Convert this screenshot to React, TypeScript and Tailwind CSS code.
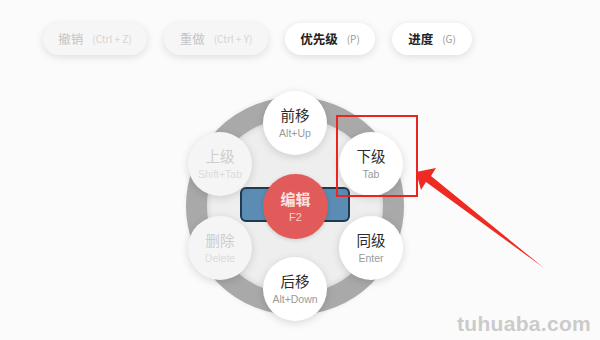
const font = "font-['Noto_Sans_CJK_SC','Noto_Sans',sans-serif]";

type Node = {
  title: string;
  key: string;
  pos: string;
  disabled?: boolean;
};

const nodes: Node[] = [
  { title: '前移', key: 'Alt+Up', pos: 'left-[77px] top-[-6px]' },
  { title: '上级', key: 'Shift+Tab', pos: 'left-[2px] top-[35px]', disabled: true },
  { title: '下级', key: 'Tab', pos: 'left-[153px] top-[35px]' },
  { title: '删除', key: 'Delete', pos: 'left-[2px] top-[119px]', disabled: true },
  { title: '同级', key: 'Enter', pos: 'left-[153px] top-[119px]' },
  { title: '后移', key: 'Alt+Down', pos: 'left-[77px] top-[160px]' },
];

const toolbar = [
  { label: '撤销', key: '(Ctrl + Z)', w: 'w-[104px]', disabled: true },
  { label: '重做', key: '(Ctrl + Y)', w: 'w-[104px]', disabled: true },
  { label: '优先级', key: '(P)', w: 'w-[90px]' },
  { label: '进度', key: '(G)', w: 'w-[80px]' },
];

export default function App() {
  return (
    <div className={`relative w-[600px] h-[340px] overflow-hidden bg-[#fbfbfb] ${font}`}>
      {/* Toolbar */}
      <div className="flex gap-[17px] pl-[43px] pt-[23px]">
        {toolbar.map((b) => (
          <div
            key={b.label}
            className={`${b.w} h-[32px] rounded-[16px] flex items-center justify-center gap-[9px] shadow-[0_2px_8px_rgba(0,0,0,0.12)] ${
              b.disabled ? 'bg-[#f6f6f6]' : 'bg-white'
            }`}
          >
            <span
              className={`text-[12.5px] leading-none ${
                b.disabled ? 'text-[#c4c4c4]' : 'text-[#222] font-bold'
              }`}
            >
              {b.label}
            </span>
            <span
              className={`text-[10px] leading-none ${
                b.disabled ? 'text-[#d4d4d4]' : 'text-[#999]'
              }`}
            >
              {b.key}
            </span>
          </div>
        ))}
      </div>

      {/* Radial menu */}
      <div className="relative ml-[186px] mt-[42px] w-[218px] h-[218px]">
        <div className="absolute inset-0 rounded-full border-[21px] border-[#a9a9a9] bg-[#eeeeee] shadow-[inset_0_0_6px_rgba(0,0,0,0.15),0_0_4px_rgba(0,0,0,0.08)]" />

        <div className="absolute left-[54px] top-[90px] w-[110px] h-[35px] rounded-[6px] border-2 border-[#203a52] bg-[#5b8cb3]" />

        {nodes.map((n) => (
          <div
            key={n.title}
            className={`absolute ${n.pos} w-[64px] h-[64px] rounded-full flex flex-col items-center justify-center shadow-[0_2px_8px_rgba(0,0,0,0.14)] ${
              n.disabled ? 'bg-[#f5f5f5]' : 'bg-white'
            }`}
          >
            <span
              className={`text-[14.5px] leading-[18px] ${
                n.disabled ? 'text-[#cdcdcd]' : 'text-[#2b2b2b]'
              }`}
            >
              {n.title}
            </span>
            <span
              className={`text-[10.5px] leading-[14px] mt-[2px] font-['Liberation_Sans',sans-serif] ${
                n.disabled ? 'text-[#dcdcdc]' : 'text-[#9a9a9a]'
              }`}
            >
              {n.key}
            </span>
          </div>
        ))}

        <div className="absolute left-[77px] top-[77px] w-[65px] h-[65px] rounded-full bg-[#e25b5b] flex flex-col items-center justify-center shadow-[0_1px_4px_rgba(0,0,0,0.15)]">
          <span className="text-[15px] leading-[18px] text-[#fbe3e3] font-bold">编辑</span>
          <span className="text-[11px] leading-[14px] mt-[2px] text-[#f6cfcf] font-['Liberation_Sans',sans-serif]">
            F2
          </span>
        </div>
      </div>

      {/* Annotation */}
      <div className="absolute left-[336px] top-[115px] w-[82px] h-[82px] border-2 border-[#e8261f]" />
      <svg className="absolute left-0 top-0" width="600" height="340" viewBox="0 0 600 340">
        <polygon
          points="416,172 436,168 431,176 544,268 426,182 421,190"
          fill="#ee2a22"
        />
      </svg>

      <div className="absolute left-[457px] top-[313px] text-[21px] font-bold leading-none text-[#cbcbcb] font-['Liberation_Sans',sans-serif] tracking-[0.3px]">
        tuhuaba.com
      </div>
    </div>
  );
}
